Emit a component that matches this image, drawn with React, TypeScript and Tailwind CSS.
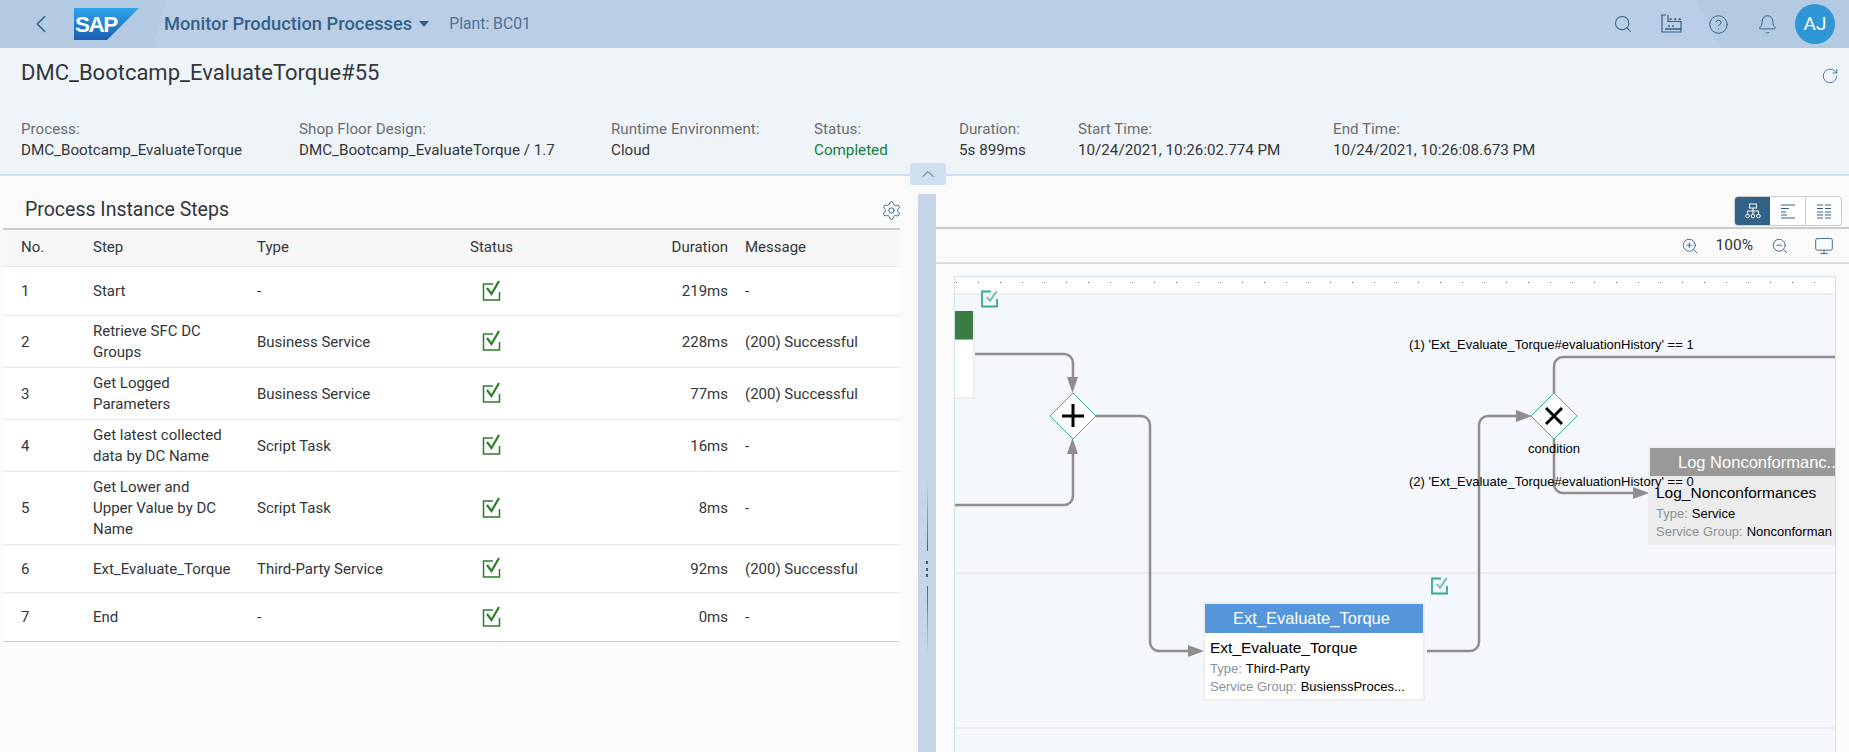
import React from 'react';
import {
  Bell,
  ChevronLeft,
  ChevronUp,
  CircleHelp,
  Monitor,
  RotateCw,
  Search,
  Settings,
  ZoomIn,
  ZoomOut,
} from 'lucide-react';

interface Step {
  no: number;
  step: string[];
  type: string;
  duration: string;
  message: string;
  rowClass: string;
}

const steps: Step[] = [
  { no: 1, step: ['Start'], type: '-', duration: '219ms', message: '-', rowClass: 'h-[49px]' },
  { no: 2, step: ['Retrieve SFC DC', 'Groups'], type: 'Business Service', duration: '228ms', message: '(200) Successful', rowClass: 'h-[52px]' },
  { no: 3, step: ['Get Logged', 'Parameters'], type: 'Business Service', duration: '77ms', message: '(200) Successful', rowClass: 'h-[52px]' },
  { no: 4, step: ['Get latest collected', 'data by DC Name'], type: 'Script Task', duration: '16ms', message: '-', rowClass: 'h-[52px]' },
  { no: 5, step: ['Get Lower and', 'Upper Value by DC', 'Name'], type: 'Script Task', duration: '8ms', message: '-', rowClass: 'h-[73px]' },
  { no: 6, step: ['Ext_Evaluate_Torque'], type: 'Third-Party Service', duration: '92ms', message: '(200) Successful', rowClass: 'h-[48px]' },
  { no: 7, step: ['End'], type: '-', duration: '0ms', message: '-', rowClass: 'h-[49px]' },
];

const infoItems = [
  { label: 'Process:', value: 'DMC_Bootcamp_EvaluateTorque', width: 'w-[278px]' },
  { label: 'Shop Floor Design:', value: 'DMC_Bootcamp_EvaluateTorque / 1.7', width: 'w-[312px]' },
  { label: 'Runtime Environment:', value: 'Cloud', width: 'w-[203px]' },
  { label: 'Status:', value: 'Completed', width: 'w-[145px]', valueClass: 'text-[#107e3e]' },
  { label: 'Duration:', value: '5s 899ms', width: 'w-[119px]' },
  { label: 'Start Time:', value: '10/24/2021, 10:26:02.774 PM', width: 'w-[255px]' },
  { label: 'End Time:', value: '10/24/2021, 10:26:08.673 PM', width: 'w-[260px]' },
];

const StatusCheck = () => (
  <svg width="22" height="22" viewBox="0 0 22 22" fill="none" className="text-[#2b7d2b]">
    <path d="M12 4H2.500v16h16v-8" stroke="currentColor" strokeWidth="1.500" />
    <path d="M6 8l4.500 6L18 1" stroke="currentColor" strokeWidth="2.200" />
  </svg>
);

const DiagramCheck = ({ className }: { className: string }) => (
  <svg width="18" height="18" viewBox="0 0 18 18" fill="none" className={`absolute text-[#35ab8b] ${className}`}>
    <path d="M10 1.500H1v15h15V9" stroke="currentColor" strokeWidth="1.800" />
    <path d="M5.500 7l3.500 4 7-10" stroke="currentColor" strokeWidth="1.100" />
    <path d="M7 6.500l2 2.500 5.500-8" stroke="currentColor" strokeWidth="0.700" opacity="0.6" />
  </svg>
);

const FactoryIcon = () => (
  <svg width="22" height="20" viewBox="0 0 22 20" fill="none" className="text-[#346187]">
    <path d="M1 1h5M2 1v17h19V7.500H8V1" stroke="currentColor" strokeWidth="1.200" />
    <path d="M9 6h3l-1-2.500zM13.500 6h3l-1-2.500zM18 6h3l-1-2.500z" fill="currentColor" />
    <path d="M8 12h2M12 12h2M5 15h16" stroke="currentColor" strokeWidth="1.400" />
  </svg>
);

const SapLogo = () => (
  <svg width="65" height="32" viewBox="0 0 65 32">
    <defs>
      <linearGradient id="sapBlue" x1="0" y1="0" x2="0" y2="1">
        <stop offset="0" stopColor="#2da6ea" />
        <stop offset="1" stopColor="#1a5db0" />
      </linearGradient>
    </defs>
    <polygon points="0,0 65,0 33,32 0,32" fill="url(#sapBlue)" />
    <text x="1" y="24" fill="#fff" fontFamily="Liberation Sans, sans-serif" fontWeight="700" fontSize="22.500" letterSpacing="-1.500">
      SAP
    </text>
  </svg>
);

// edges and gateways use page coordinates through the viewBox
const DiagramEdges = () => (
  <svg width="882" height="476" viewBox="954 276 882 476" fill="none" className="absolute left-[-1px] top-[-1px]">
    <g stroke="#8f8d8d" strokeWidth="2.500">
      <path d="M975 354H1064a9 9 0 0 1 9 9V380" />
      <path d="M955 505H1064a9 9 0 0 0 9-9V452" />
      <path d="M1096 416H1141a9 9 0 0 1 9 9V642a9 9 0 0 0 9 9H1190" />
      <path d="M1427 651H1470a9 9 0 0 0 9-9V425a9 9 0 0 1 9-9H1518" />
      <path d="M1554 393V366a9 9 0 0 1 9-9H1836" />
      <path d="M1554 439V484a9 9 0 0 0 9 9H1635" />
    </g>
    <g fill="#8f8d8d">
      <polygon points="1067,377 1078,377 1072.500,393" />
      <polygon points="1067,454 1078,454 1072.500,438" />
      <polygon points="1188,645 1188,657 1204,651" />
      <polygon points="1516,410 1516,422 1532,416" />
      <polygon points="1633,487 1633,499 1649,493" />
    </g>
    <polygon points="1073,393 1096,416 1073,439 1050,416" fill="#fff" stroke="#35ab8b" strokeWidth="1" />
    <path d="M1073 404V427M1062 416H1084" stroke="#000" strokeWidth="3" />
    <polygon points="1554,393 1577,416 1554,439 1531,416" fill="#fff" stroke="#35ab8b" strokeWidth="1" />
    <path d="M1546 408L1562 424M1562 408L1546 424" stroke="#000" strokeWidth="3" />
  </svg>
);

const Diagram = () => (
  <div className="relative ml-[18px] mr-[13px] mt-[12px] flex-1 overflow-hidden border-l border-t border-r border-[#d5e1ee] bg-[#f4f7fc] font-['Liberation_Sans',sans-serif] text-black">
    {/* top lane with the dotted ruler */}
    <div className="flex h-[18px] gap-[21px] border-b-2 border-[#ededed] bg-white pl-[1px] pt-[5px]">
      {Array.from({ length: 40 }, (_, i) => (
        <span key={i} className="h-[1px] w-[1px] shrink-0 bg-[#666]" />
      ))}
    </div>
    <div className="absolute left-0 right-0 top-[295px] h-[2px] bg-[#ededed]" />
    <div className="absolute left-0 right-0 top-[450px] h-[2px] bg-[#ededed]" />

    {/* start node, cut off by the left edge */}
    <div className="absolute left-0 top-[34px] h-[88px] w-[20px] border-b-2 border-r-2 border-[#eeeeee] bg-white">
      <div className="h-[29px] border-b border-[#8fb79a] bg-[#3a7d44]" />
    </div>

    <DiagramEdges />
    <DiagramCheck className="left-[26px] top-[13px]" />
    <DiagramCheck className="left-[476px] top-[300px]" />

    <span className="absolute left-[454px] top-[59px] whitespace-nowrap text-[13px] leading-[18px]">(1) 'Ext_Evaluate_Torque#evaluationHistory' == 1</span>
    <span className="absolute left-[573px] top-[163px] whitespace-nowrap text-[13px] leading-[18px]">condition</span>

    {/* Ext_Evaluate_Torque node */}
    <div className="absolute left-[248px] top-[325px] w-[222px] border-2 border-[#eeeeee] bg-white">
      <div className="h-[29px] bg-[#5596db] pr-[5px] text-center text-[16.500px] leading-[29px] text-white">Ext_Evaluate_Torque</div>
      <div className="px-[5px] pt-[6px]">
        <div className="text-[15.500px] leading-[18px]">Ext_Evaluate_Torque</div>
        <div className="mt-[3px] text-[13px] leading-[18px]"><span className="mr-1 text-[#89919a]">Type:</span>Third-Party</div>
        <div className="h-[21px] text-[13px] leading-[18px]"><span className="mr-1 text-[#89919a]">Service Group:</span>BusienssProces...</div>
      </div>
    </div>

    {/* Log_Nonconformances node, cut off by the right edge */}
    <div className="absolute left-[693px] top-[169px] w-[220px] border-2 border-[#eeeeee] bg-[#ececec]">
      <div className="h-[28px] bg-[#999999] pl-[28px] text-[16.500px] leading-[28px] text-white">Log Nonconformanc..</div>
      <div className="px-[6px] pt-[8px]">
        <div className="text-[15.500px] leading-[18px]">Log_Nonconformances</div>
        <div className="mt-[3px] text-[13px] leading-[18px]"><span className="mr-1 text-[#89919a]">Type:</span>Service</div>
        <div className="h-[20px] whitespace-nowrap text-[13px] leading-[18px]"><span className="mr-1 text-[#89919a]">Service Group:</span>Nonconforman</div>
      </div>
    </div>

    <span className="absolute left-[454px] top-[196px] whitespace-nowrap text-[13px] leading-[18px]">(2) 'Ext_Evaluate_Torque#evaluationHistory' == 0</span>
  </div>
);

const StepsTable = () => (
  <table className="ml-[3px] w-[897px] table-fixed border-collapse text-[15px] leading-[21px] text-[#32363a]">
    <colgroup>
      <col className="w-[90px]" />
      <col className="w-[164px]" />
      <col className="w-[190px]" />
      <col className="w-[90px]" />
      <col className="w-[194px]" />
      <col />
    </colgroup>
    <thead>
      <tr className="h-[37px] border-b border-t-2 border-b-[#e5e5e5] border-t-[#cccccc] bg-[#f7f7f7] text-left font-normal">
        <th className="pl-[18px] font-normal">No.</th>
        <th className="font-normal">Step</th>
        <th className="font-normal">Type</th>
        <th className="pl-[23px] font-normal">Status</th>
        <th className="pr-[3px] text-right font-normal">Duration</th>
        <th className="pl-[14px] font-normal">Message</th>
      </tr>
    </thead>
    <tbody>
      {steps.map((s) => (
        <tr key={s.no} className={`${s.rowClass} border-b border-[#e5e5e5] bg-white last:border-[#cccccc]`}>
          <td className="pl-[18px] pt-[2px]">{s.no}</td>
          <td className="whitespace-nowrap pt-[2px]">
            {s.step.map((line) => (
              <div key={line}>{line}</div>
            ))}
          </td>
          <td className="pt-[2px]">{s.type}</td>
          <td>
            <div className="flex justify-center">
              <StatusCheck />
            </div>
          </td>
          <td className="pr-[3px] pt-[2px] text-right">{s.duration}</td>
          <td className="pl-[14px] pt-[2px]">{s.message}</td>
        </tr>
      ))}
    </tbody>
  </table>
);

export default function App() {
  return (
    <div className="flex h-screen w-full flex-col overflow-hidden bg-[#fafafa] font-['Roboto',sans-serif] text-[#32363a]">
      {/* Shell header */}
      <header className="relative flex h-[48px] shrink-0 items-center overflow-hidden bg-[#bacfe6]">
        <svg width="1849" height="48" className="absolute left-0 top-0">
          <polygon points="0,0 166,0 152,48 0,48" fill="#b4c9e2" />
          <polygon points="1695,0 1849,0 1849,48 1722,48" fill="#b4c9e2" />
        </svg>
        <div className="relative ml-[26px] flex w-[48px] text-[#346187]">
          <ChevronLeft size={30} strokeWidth={1.3} />
        </div>
        <div className="relative flex h-[32px] w-[65px]">
          <SapLogo />
        </div>
        <span className="relative ml-[25px] text-[18.300px] font-medium text-[#346187]">Monitor Production Processes</span>
        <span className="relative ml-[7px] h-0 w-0 border-l-[5px] border-r-[5px] border-t-[6px] border-l-transparent border-r-transparent border-t-[#346187]" />
        <span className="relative ml-[20px] text-[15.750px] text-[#4f7196]">Plant: BC01</span>
        <div className="relative ml-auto mr-[14px] flex items-center text-[#346187]">
          <Search size={20} strokeWidth={1.25} />
          <div className="ml-[27px]"><FactoryIcon /></div>
          <CircleHelp size={21} strokeWidth={1.1} className="ml-[26px]" />
          <Bell size={21} strokeWidth={1.1} className="ml-[28px]" />
          <div className="ml-[17px] flex h-[40px] w-[40px] items-center justify-center rounded-full bg-[#2f96d5] text-[19px] text-white">AJ</div>
        </div>
      </header>

      {/* Object header */}
      <section className="relative h-[128px] shrink-0 border-b-2 border-[#d0e0f0] bg-[#eff4f9]">
        <div className="flex items-start justify-between pl-[21px] pr-[10px] pt-[11px]">
          <h1 className="text-[22px] leading-[28px]">DMC_Bootcamp_EvaluateTorque#55</h1>
          <RotateCw size={18} strokeWidth={1.1} className="mt-[8px] text-[#346187]" />
        </div>
        <div className="mt-[32px] flex pl-[21px] text-[15.200px] leading-[21px]">
          {infoItems.map((item) => (
            <div key={item.label} className={`${item.width} shrink-0`}>
              <div className="text-[#6a6d70]">{item.label}</div>
              <div className={item.valueClass ?? ''}>{item.value}</div>
            </div>
          ))}
        </div>
        <button className="absolute left-[910px] top-[115px] z-10 flex h-[22px] w-[36px] items-center justify-center rounded-[3px] bg-[#d0e0f0] text-[#346187]">
          <ChevronUp size={20} strokeWidth={1.2} />
        </button>
      </section>

      {/* Main split */}
      <main className="flex min-h-0 flex-1">
        <div className="w-[918px] shrink-0">
          <div className="flex h-[52px] items-center justify-between pl-[25px] pr-[16px] pt-[16px]">
            <h2 className="text-[19.500px]">Process Instance Steps</h2>
            <Settings size={21} strokeWidth={1.1} className="text-[#346187]" />
          </div>
          <StepsTable />
        </div>

        <div className="mt-[18px] flex w-[18px] shrink-0 flex-col items-center bg-[#c6d6e6] pt-[289px]">
          <div className="h-[68px] w-[1px] bg-gradient-to-b from-transparent to-[#346187]" />
          <div className="mt-[10px] flex h-[16px] flex-col justify-between">
            {[0, 1, 2].map((i) => (
              <span key={i} className="h-[3px] w-[2px] bg-[#346187]" />
            ))}
          </div>
          <div className="mt-[9px] h-[68px] w-[1px] bg-gradient-to-t from-transparent to-[#346187]" />
        </div>

        <div className="flex min-w-0 flex-1 flex-col">
          <div className="flex h-[53px] shrink-0 items-start justify-end border-b-2 border-[#cccccc] pr-[7px] pt-[20px]">
            <div className="flex h-[30px] overflow-hidden rounded-[4px] border border-[#cccccc] bg-white text-[#346187]">
              <div className="flex w-[35px] items-center justify-center bg-[#346187] text-white">
                <svg width="16" height="16" viewBox="0 0 16 16" fill="none" stroke="currentColor" strokeWidth="1">
                  <rect x="4.500" y="1" width="7" height="4" />
                  <path d="M8 5v3M2.500 11V8h11v3M8 8v3" />
                  <circle cx="2.500" cy="13" r="1.800" />
                  <circle cx="8" cy="13" r="1.800" />
                  <circle cx="13.500" cy="13" r="1.800" />
                </svg>
              </div>
              <div className="flex w-[36px] items-center justify-center border-r border-[#cccccc]">
                <svg width="16" height="16" viewBox="0 0 16 16" fill="none" stroke="currentColor" strokeWidth="1">
                  <path d="M1 2h14M1 5.500h8M1 9h5M1 12h6M1 15h14" />
                </svg>
              </div>
              <div className="flex w-[35px] items-center justify-center">
                <svg width="16" height="16" viewBox="0 0 16 16" fill="none" stroke="currentColor" strokeWidth="1">
                  <path d="M1 2h6M9 2h6M1 5.500h6M9 5.500h6M1 9h6M9 9h6M1 12h6M9 12h6M1 15h6M9 15h6" />
                </svg>
              </div>
            </div>
          </div>
          <div className="flex h-[35px] shrink-0 items-center justify-end border-b-2 border-[#dddddd] pr-[15px] text-[#346187]">
            <ZoomIn size={18} strokeWidth={1.2} />
            <span className="ml-[17px] text-[15.500px] text-[#32363a]">100%</span>
            <ZoomOut size={18} strokeWidth={1.2} className="ml-[18px]" />
            <Monitor size={20} strokeWidth={1.1} className="ml-[25px]" />
          </div>
          <Diagram />
        </div>
      </main>
    </div>
  );
}
